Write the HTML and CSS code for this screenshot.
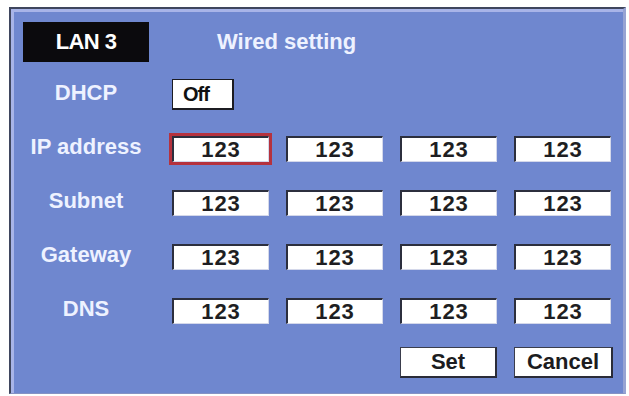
FILE: index.html
```html
<!DOCTYPE html>
<html>
<head>
<meta charset="utf-8">
<link rel="stylesheet" href="styles.css">
</head>
<body>
<div class="panel">
  <div class="header">
    <div class="tab">LAN 3</div>
    <div class="title">Wired setting</div>
  </div>
  <div class="row dhcp">
    <div class="label">DHCP</div>
    <div class="toggle">Off</div>
  </div>
  <div class="row">
    <div class="label">IP address</div>
    <div class="field focus">123</div>
    <div class="field">123</div>
    <div class="field">123</div>
    <div class="field">123</div>
  </div>
  <div class="row">
    <div class="label">Subnet</div>
    <div class="field">123</div>
    <div class="field">123</div>
    <div class="field">123</div>
    <div class="field">123</div>
  </div>
  <div class="row">
    <div class="label">Gateway</div>
    <div class="field">123</div>
    <div class="field">123</div>
    <div class="field">123</div>
    <div class="field">123</div>
  </div>
  <div class="row">
    <div class="label">DNS</div>
    <div class="field">123</div>
    <div class="field">123</div>
    <div class="field">123</div>
    <div class="field">123</div>
  </div>
  <div class="row actions">
    <div class="btn set">Set</div>
    <div class="btn cancel">Cancel</div>
  </div>
</div>
</body>
</html>
```
FILE: styles.css
```css
html, body {
  margin: 0;
  padding: 0;
  background: #ffffff;
}
body {
  font-family: "Liberation Sans", Arial, sans-serif;
  font-weight: bold;
}
.panel {
  box-sizing: border-box;
  margin: 7px 0 0 9px;
  width: 617px;
  height: 387px;
  background: #6f87cf;
  border-top: 2px solid #3f465e;
  border-left: 2px solid #3f465e;
  border-right: 3px solid #97a3d3;
  border-bottom: 1px solid #8592c4;
  box-shadow: inset 3px 3px 0 #a8b4e8;
  padding: 13px 0 0 12px;
}
.header {
  display: flex;
  align-items: center;
  height: 40px;
}
.tab {
  width: 126px;
  height: 40px;
  background: #0b0a0d;
  color: #ffffff;
  font-size: 22px;
  letter-spacing: -0.6px;
  display: flex;
  align-items: center;
  justify-content: center;
}
.title {
  margin-left: 68px;
  color: #eef2ff;
  font-size: 22px;
  padding-bottom: 1px;
}
.row {
  display: grid;
  grid-template-columns: 132px repeat(4, 97px);
  column-gap: 17px;
  align-items: center;
  height: 54px;
}
.row.dhcp {
  margin-top: 5px;
  height: 55px;
}
.row.actions {
  height: 49px;
}
.label {
  color: #eef2ff;
  font-size: 22px;
  text-align: center;
  padding-right: 6px;
  padding-bottom: 4px;
  white-space: nowrap;
}
.toggle {
  box-sizing: border-box;
  width: 62px;
  height: 31px;
  background: #ffffff;
  border: 2px solid #1c1c22;
  border-top-width: 1px;
  border-left-width: 1px;
  color: #111;
  font-size: 20px;
  letter-spacing: -1px;
  padding-left: 10px;
  display: flex;
  align-items: center;
}
.field {
  box-sizing: border-box;
  height: 26px;
  background: #ffffff;
  border-top: 2px solid #2c2f3e;
  border-left: 2px solid #2c2f3e;
  border-right: 1px solid #d4d8ea;
  border-bottom: 1px solid #d4d8ea;
  color: #1e1e22;
  font-size: 22px;
  letter-spacing: 1px;
  text-align: center;
  line-height: 23px;
}
.field.focus {
  outline: 3px solid #b5323e;
  outline-offset: 0;
}
.btn {
  box-sizing: border-box;
  height: 31px;
  background: #ffffff;
  border: 1px solid #3a3d4c;
  border-right: 2px solid #2a2c38;
  border-bottom: 2px solid #2a2c38;
  color: #1c1c20;
  font-size: 22px;
  display: flex;
  align-items: center;
  justify-content: center;
}
.btn.set {
  grid-column: 4;
}
.btn.cancel {
  grid-column: 5;
  width: 99px;
}
```
